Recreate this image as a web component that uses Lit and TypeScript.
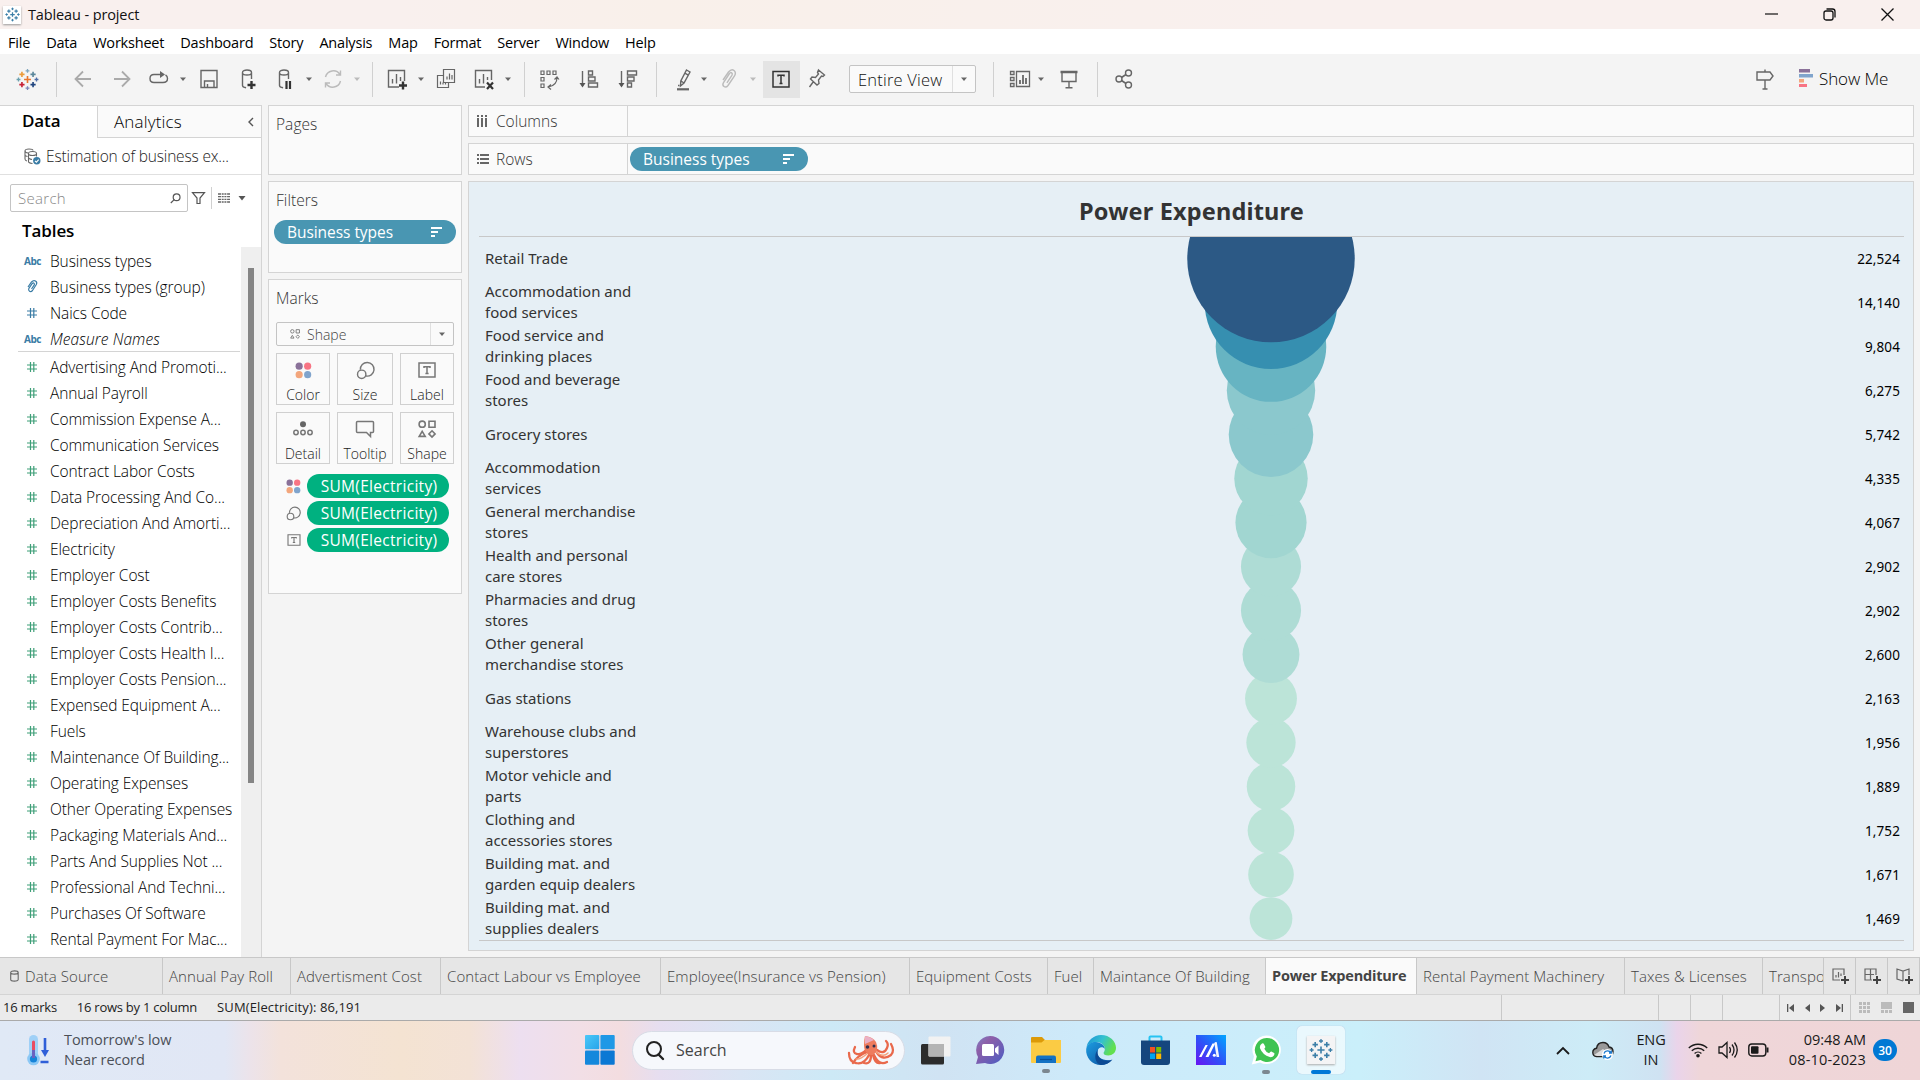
import { LitElement, html, svg, css } from "lit";
import { customElement } from "lit/decorators.js";

const MENU = ["File", "Data", "Worksheet", "Dashboard", "Story", "Analysis", "Map", "Format", "Server", "Window", "Help"];

const DIMENSIONS: Array<[string, string]> = [
  ["abc", "Business types"],
  ["clip", "Business types (group)"],
  ["num", "Naics Code"],
  ["abc", "Measure Names"],
];

const MEASURES = [
  "Advertising And Promoti...", "Annual Payroll", "Commission Expense A...", "Communication Services",
  "Contract Labor Costs", "Data Processing And Co...", "Depreciation And Amorti...", "Electricity",
  "Employer Cost", "Employer Costs Benefits", "Employer Costs Contrib...", "Employer Costs Health I...",
  "Employer Costs Pension...", "Expensed Equipment A...", "Fuels", "Maintenance Of Building...",
  "Operating Expenses", "Other Operating Expenses", "Packaging Materials And...", "Parts And Supplies Not ...",
  "Professional And Techni...", "Purchases Of Software", "Rental Payment For Mac...",
];

const DATA: Array<[string[], number, string]> = [
  [["Retail Trade"], 22524, "#2c5985"],
  [["Accommodation and", "food services"], 14140, "#368fb0"],
  [["Food service and", "drinking places"], 9804, "#67b4c2"],
  [["Food and beverage", "stores"], 6275, "#8bc8cd"],
  [["Grocery stores"], 5742, "#8bc8cd"],
  [["Accommodation", "services"], 4335, "#a1d6d1"],
  [["General merchandise", "stores"], 4067, "#a1d6d1"],
  [["Health and personal", "care stores"], 2902, "#aedcd5"],
  [["Pharmacies and drug", "stores"], 2902, "#aedcd5"],
  [["Other general", "merchandise stores"], 2600, "#aedcd5"],
  [["Gas stations"], 2163, "#bce4d8"],
  [["Warehouse clubs and", "superstores"], 1956, "#bce4d8"],
  [["Motor vehicle and", "parts"], 1889, "#bce4d8"],
  [["Clothing and", "accessories stores"], 1752, "#bce4d8"],
  [["Building mat. and", "garden equip dealers"], 1671, "#bce4d8"],
  [["Building mat. and", "supplies dealers"], 1469, "#bce4d8"],
];

const TABS = [
  "Annual Pay Roll", "Advertisment Cost", "Contact Labour vs Employee", "Employee(Insurance vs Pension)",
  "Equipment Costs", "Fuel", "Maintance Of Building", "Power Expenditure", "Rental Payment Machinery",
  "Taxes & Licenses", "Transpo",
];

const icon = (w: number, h: number, body: unknown, cls = "") =>
  html`<svg class="i ${cls}" width=${w} height=${h} viewBox="0 0 ${w} ${h}" fill="none" stroke="#666" stroke-width="1.4">${body}</svg>`;

const caret = (color = "#666") =>
  html`<svg class="i" width="8" height="8" viewBox="0 0 8 8"><path d="M1 2.5h6L4 6z" fill=${color} /></svg>`;

const plus = (x: number, y: number, r: number, c: string, w: number) =>
  svg`<path d="M${x - r} ${y}h${2 * r}M${x} ${y - r}v${2 * r}" stroke=${c} stroke-width=${w} />`;

const tableauMark = (size: number, c: string[], w: number) => html`
  <svg class="i" width=${size} height=${size} viewBox="0 0 24 24" fill="none">
    ${plus(12, 12, 3.6, c[0], w)}
    ${plus(6.2, 6.6, 2.7, c[1], w)} ${plus(17.8, 6.6, 2.7, c[2], w)}
    ${plus(6.2, 17.4, 2.7, c[3], w)} ${plus(17.8, 17.4, 2.7, c[4], w)}
    ${plus(12, 3, 2, c[5], w * 0.8)} ${plus(12, 21, 2, c[6], w * 0.8)}
    ${plus(2.6, 12, 2, c[7], w * 0.8)} ${plus(21.4, 12, 2, c[8], w * 0.8)}
  </svg>`;
const BLUE9 = Array(9).fill("#3c7fa8");
const TINTS = ["#e8762d", "#eb9c3c", "#5b879b", "#c72035", "#1f447e", "#7fa6bd", "#7b86b8", "#6ba0ae", "#4f6ea8"];

const sortGlyph = svg`<path d="M0 1h11M0 5h7M0 9h4" stroke="#fff" stroke-width="2" />`;

const colorDots = (s: number) => html`<svg class="i" width=${s} height=${s} viewBox="0 0 18 18">
  <circle cx="4.4" cy="4.4" r="3.8" fill="#8a7199" /><circle cx="13.4" cy="4.4" r="3.8" fill="#f87484" />
  <circle cx="4.4" cy="13.4" r="3.8" fill="#f3a67c" /><circle cx="13.4" cy="13.4" r="3.8" fill="#80a4cc" /></svg>`;
const sizeGlyph = (s: number) => html`<svg class="i" width=${s} height=${s} viewBox="0 0 20 20" fill="none" stroke="#777" stroke-width="1.5">
  <path d="M4.6 9.2a7.2 7.2 0 1 1 5.8 6.6" /><circle cx="6" cy="14" r="4.4" /></svg>`;
const labelGlyph = (w: number, h: number) => html`<svg class="i" width=${w} height=${h} viewBox="0 0 18 16" fill="none" stroke="#777" stroke-width="1.5">
  <path d="M1 1h16v14H1zM6 6V4.7h6V6M9 4.7v6.6M7.4 11.4h3.2" /></svg>`;
const shapeGlyph = (s: number) => html`<svg class="i" width=${s} height=${s} viewBox="0 0 18 18" fill="none" stroke="#777" stroke-width="1.6">
  <circle cx="4.2" cy="4.2" r="3.1" /><path d="M11 1.2h6v6h-6zM4.2 11.4l3 5h-6zM14 10.8l3.1 3.1-3.1 3.1-3.1-3.1z" /></svg>`;
const detailGlyph = html`<svg class="i" width="20" height="16" viewBox="0 0 20 16" fill="none" stroke="#777" stroke-width="1.5">
  <circle cx="10" cy="3.2" r="3" fill="#666" stroke="none" /><circle cx="3" cy="11.5" r="2.2" /><circle cx="10" cy="11.5" r="2.2" /><circle cx="17" cy="11.5" r="2.2" /></svg>`;
const tooltipGlyph = html`<svg class="i" width="20" height="18" viewBox="0 0 20 18" fill="none" stroke="#777" stroke-width="1.5">
  <path d="M2.5 1.5h15q1 0 1 1v9q0 1-1 1h-2v4l-4-4h-9q-1 0-1-1v-9q0-1 1-1z" /></svg>`;

const cylinder = svg`<path d="M15.500 12V5.500c0-3.400-9-3.400-9 0v13c0 1.400 1.600 2 3.600 2.300M6.500 5.800c0 3 9 3 9 0" />`;

@customElement("tb-toolbar")
class TbToolbar extends LitElement {
  static styles = css`
    :host { display: grid; height: 51px; padding: 0 0 0 16px; align-items: center; background: #f4f4f4;
      grid-template-columns: 40px 15px 39px 37px 32px 18px 39px 37px 32px 16px 32px 19px 13px 32px 17px 38px 32px 20px 13px 40px 39px 40px 15px 29px 17px 32px 14px 42px 44px 144px 13px 31px 20px 40px 15px 641px 46px 1fr;
      font: 350 17px "Open Sans", "Noto Sans", sans-serif; color: #111; padding-bottom: 1px; box-sizing: border-box; }
    .i { display: block; overflow: visible; }
    .sep { width: 1px; height: 35px; background: #d0d0d0; }
    .on { width: 37px; height: 37px; background: #e4e4e4; display: grid; place-items: center; }
    .on > .i { margin-right: 2px; }
    .select { width: 127px; height: 28px; box-sizing: border-box; border: 1px solid #c4c4c4; border-radius: 2px; background: #fafafa; display: flex; align-items: center; }
    .val { flex: 1; padding-left: 8px; font-size: 16.500px; letter-spacing: 0.2px; }
    .drop { width: 22px; height: 26px; border-left: 1px solid #e0e0e0; display: grid; place-items: center; }
    .show { display: flex; gap: 5px; align-items: center; font-size: 17px; letter-spacing: -0.1px; color: #000; white-space: nowrap; padding-bottom: 2px; }
  `;
  render() {
    const sep = html`<span class="sep"></span>`;
    const g = "#bbb";
    return html`
      ${tableauMark(23, TINTS, 1.7)}${sep}
      ${icon(24, 24, svg`<path d="M20 12H4.5M12 4.5L4.5 12l7.5 7.5" stroke="#aaa" stroke-width="1.8" />`)}
      ${icon(24, 24, svg`<path d="M4 12h15.5M12 4.5l7.5 7.5-7.5 7.5" stroke="#aaa" stroke-width="1.8" />`)}
      ${icon(24, 24, svg`<path d="M16 7.500H7q-4 0-4 4t4 4h9q4.500 0 4.500-4q0-2.500-2-3.500" /><path d="M13 4l5 3.500-5 3.500z" fill="#666" stroke="none" />`)}
      ${caret()}
      ${icon(24, 24, svg`<path d="M4 3.500h16v17H4zM7.500 20v-6h9.500v6M10.500 20v-3" />`)}
      ${icon(24, 24, svg`${cylinder}<path d="M11.500 18h8M15.500 14v8" stroke="#333" stroke-width="2.400" />`)}
      ${icon(24, 24, svg`${cylinder}<path d="M13.500 14v8M17 14v8" stroke="#333" stroke-width="2.200" />`)}
      ${caret()}
      ${icon(24, 24, svg`<path d="M4.500 10a8 8 0 0 1 14.500-2.500M19.500 14a8 8 0 0 1-14.500 2.500M19.500 3.500V8H15M4.500 20.500V16H9" stroke=${g} />`)}
      ${caret(g)}${sep}
      ${icon(24, 24, svg`<path d="M14 20H3.500V3.500h16V14M7.500 16.500V12M11.500 16.500V7M15.500 14v-4" /><path d="M14 18.500h8M18 14.500v8" stroke="#333" stroke-width="2.400" />`)}
      ${caret()}
      ${icon(24, 24, svg`<path d="M9.500 2.500h11v13h-11zM9 8.500H3.500v12h11V16M13 12.500V9.500M15.500 12.500V6.500M18 12.500V8M6.500 17.500v-3M9 17.500v-2M11.500 17.500v-2" stroke-width="1.200" />`)}
      ${icon(24, 24, svg`<path d="M13 20H3.500V3.500h16V13M7.500 16.500V12M11.500 16.500V7M15.500 13v-3" /><path d="M15 15.500l6 6.500M21 15.500L15 22" stroke="#333" stroke-width="2.200" />`)}
      ${caret()}${sep}
      ${icon(24, 24, svg`<path d="M4 4h3v3.500H4zM10 4h3v3.500h-3zM16 4h3v3.500h-3zM4 10.500h3v3.500H4zM4 17h3v3.500H4zM20 10.500q0 8-8.500 9.500M17.500 12.500l2.500-2.500 2 2.500M14 17.500l-3 2.500 3 2.500" stroke-width="1.200" />`)}
      ${icon(24, 24, svg`<path d="M5.500 4v15M11.500 4h4v4h-4zM11.500 10h6.500v4h-6.500zM11.500 16h9v4h-9z" /><path d="M2.500 16h6l-3 4.500z" fill="#555" stroke="none" />`)}
      ${icon(24, 24, svg`<path d="M5.500 4v15M11.500 4h9v4h-9zM11.500 10h6.500v4h-6.500zM11.500 16h4v4h-4z" /><path d="M2.500 16h6l-3 4.500z" fill="#555" stroke="none" />`)}
      ${sep}
      ${icon(24, 24, svg`<path d="M15.500 3l3.500 2-6 11-3.500 3 .3-5zM13.800 6.200l3.500 2M10 14l3 2" /><path d="M6 22.300h12" stroke-width="2.200" /><path d="M7 18.500h1.500" />`)}
      ${caret()}
      ${icon(24, 24, svg`<path d="M6 13l5.500-8q3-3.500 5.500-1.500t.5 5.500l-6.500 9.500q-2 2.500-4 1t-.5-4l6-9q1-1.500 2.200-.6t.2 2.500l-5 7.500" stroke=${g} />`)}
      ${caret(g)}
      <span class="on">${icon(24, 24, svg`<path d="M4 4.500h16v15.500H4zM9 9.500V8.200h6v1.300M12 8.200v8.200M10.500 16.400h3" stroke="#333" stroke-width="1.500" />`)}</span>
      ${icon(24, 24, svg`<path d="M13.500 3l6 5-1.500 1.500-1.500-.5-3 4 .5 3.500-2 1.500-6.500-6 1.500-2 3.500.5 3-3.500-1-1.500zM8.500 14.500L4.500 20" />`)}
      <span class="select"><span class="val">Entire View</span><span class="drop">${caret()}</span></span>
      ${sep}
      ${icon(28, 24, svg`<path d="M4.500 4.500h3.500v3h-3.500zM4.500 10.500h3.500v3h-3.500zM4.500 16.500h3.500v3h-3.500zM10.500 4.500h13v15h-13z" stroke-width="1.300" /><path d="M14 17v-4M17 17V8M20 17v-6" stroke-width="1.800" />`)}
      ${caret()}
      ${icon(24, 24, svg`<path d="M3.500 5h17" stroke-width="2.500" /><path d="M5 5v9.500h14V5M12 15v5.500M8.500 20.800h7" />`)}
      ${sep}
      ${icon(24, 24, svg`<circle cx="7" cy="12" r="3" /><circle cx="16.500" cy="6" r="3" /><circle cx="16.500" cy="18" r="3" /><path d="M9.500 10.500l4.500-3M9.500 13.500l4.500 3" stroke-width="1.600" />`)}
      ${icon(24, 24, svg`<path d="M4 5h13l3 4-3 4H4zM12 2.500V5M12 13v9M9.500 22h5" />`)}
      <span class="show"><svg class="i" width="15" height="18" viewBox="0 0 15 18">
        <path d="M0 0h11v3.500H0z" fill="#8a7199" /><path d="M0 5h14v3.500H0z" fill="#80a4cc" />
        <path d="M0 10h5v3.500H0z" fill="#f3a67c" /><path d="M0 15h8v3H0z" fill="#f87484" /></svg>Show Me</span>
    `;
  }
}

@customElement("tb-sidebar")
class TbSidebar extends LitElement {
  static styles = css`
    :host { display: flex; flex-direction: column; width: 262px; box-sizing: border-box; background: #fff; border-top: 1px solid #d4d4d4; border-right: 1px solid #d4d4d4;
      font: 350 15.500px "Open Sans", "Noto Sans", sans-serif; color: #000; overflow: hidden; }
    .i { display: block; overflow: visible; }
    .tabs { display: flex; height: 32px; }
    .data { width: 97px; padding-left: 22px; box-sizing: border-box; font-weight: 600; font-size: 17px; line-height: 30px; color: #000; letter-spacing: -0.1px; }
    .ana { flex: 1; display: flex; justify-content: space-between; align-items: center; padding: 0 6px 0 16px; background: #fafafa; border-left: 1px solid #d4d4d4; border-bottom: 1px solid #d4d4d4; font-size: 17px; letter-spacing: 0.15px; box-sizing: border-box; }
    .src { display: flex; height: 36px; align-items: center; gap: 5px; padding-left: 24px; border-bottom: 1px solid #e0e0e0; color: #222; letter-spacing: -0.17px; box-sizing: border-box; height: 37px; }
    .tools { display: flex; align-items: center; padding: 9px 0 0 10px; height: 28px; }
    .search { width: 178px; height: 28px; box-sizing: border-box; border: 1px solid #c4c4c4; border-radius: 2px; display: flex; align-items: center; justify-content: space-between; padding: 0 6px 0 7px; color: #888; font-size: 15px; letter-spacing: 0.3px; }
    .filter { margin-left: 4px; }
    .bar { width: 1px; height: 22px; background: #d0d0d0; margin: 0 6px 0 6px; }
    .car { margin-left: 8px; }
    .tables { font-weight: 600; font-size: 17px; color: #000; padding: 7px 0 0 22px; line-height: 24px; height: 28px; letter-spacing: -0.1px; }
    .body { display: flex; flex: 1; min-height: 0; }
    .list { width: 241px; }
    .row { display: grid; grid-template-columns: 32px 1fr; height: 26px; align-items: center; padding-left: 18px; white-space: nowrap; letter-spacing: -0.1px; }
    .name { line-height: 26px; padding-top: 1px; }
    .it { font-style: italic; letter-spacing: 0.1px; }
    .abc { color: #3a7ca5; font-size: 10px; font-weight: 700; padding-left: 6px; letter-spacing: -0.5px; }
    .ico { padding-left: 9px; }
    .rule { height: 1px; background: #d4d4d4; margin: 0 1px 1px 18px; }
    .track { width: 20px; background: #efefef; padding: 21px 0 0 7px; box-sizing: border-box; }
    .thumb { width: 6px; height: 515px; background: #858585; }
  `;
  private typeIcon(kind: string, color: string) {
    if (kind === "abc") return html`<span class="abc">Abc</span>`;
    if (kind === "clip")
      return html`<span class="ico"><svg class="i" width="11" height="13" viewBox="0 0 11 13" fill="none" stroke="#3a7ca5" stroke-width="1.200"><path d="M1 7l3.500-5q2-2.200 4-1t.8 3.500L5.500 10.500q-1.500 1.800-3 .8t-.6-3L5.300 3.500q1-1 1.800-.2t0 1.900L4.500 9" /></svg></span>`;
    return html`<span class="ico"><svg class="i" width="10" height="10" viewBox="0 0 10 10" fill="none" stroke=${color} stroke-width="1.200"><path d="M0 3h10M0 7h10M3.500 0v10M6.800 0v10" /></svg></span>`;
  }
  render() {
    return html`
      <div class="tabs"><div class="data">Data</div><div class="ana">Analytics<svg class="i" width="8" height="10" viewBox="0 0 8 10" fill="none" stroke="#555" stroke-width="1.400"><path d="M6 1L2 5l4 4" /></svg></div></div>
      <div class="src"><svg class="i" width="17" height="17" viewBox="0 0 17 17" fill="none" stroke="#666" stroke-width="1.100">
        <path d="M1 3v8q0 1.500 2 2M1 3q0-2 4-2t4 1.500M1 3q0 1.500 3 2M1 7q0 1 2.500 1.500M4.500 5.500v8q0 1.500 4 2M4.500 5.500q0-2 4-2t4 2v3M4.500 5.500q0 2 4 2t4-2M4.500 9.500q0 1.500 3.500 2" />
        <circle cx="12.800" cy="12.800" r="3.700" fill="#3a7ca5" stroke="none" /><path d="M11 12.800l1.400 1.400 2.300-2.600" stroke="#fff" /></svg>Estimation of business ex...</div>
      <div class="tools">
        <div class="search">Search<svg class="i" width="11" height="11" viewBox="0 0 11 11" fill="none" stroke="#555" stroke-width="1.200"><circle cx="6.600" cy="4.200" r="3.400" /><path d="M4.200 6.600L.8 10" /></svg></div>
        <svg class="i filter" width="13" height="12" viewBox="0 0 13 12" fill="none" stroke="#555" stroke-width="1.200"><path d="M.5 .6h12L8 6v5.500H5V6z" /></svg>
        <span class="bar"></span>
        <svg class="i" width="12" height="10" viewBox="0 0 12 10"><path d="M0 1h12M0 3.700h12M0 6.400h12M0 9h12" stroke="#666" stroke-width="1.300" stroke-dasharray="3 .7 2 .7 2 .7 3" /></svg>
        <svg class="i car" width="8" height="5" viewBox="0 0 8 5"><path d="M.5 0h7L4 4.500z" fill="#555" /></svg>
      </div>
      <div class="tables">Tables</div>
      <div class="body">
        <div class="list">
          ${DIMENSIONS.map(([k, n]) => html`<div class="row">${this.typeIcon(k, "#3a7ca5")}<span class="name ${n === "Measure Names" ? "it" : ""}">${n}</span></div>`)}
          <div class="rule"></div>
          ${MEASURES.map((n) => html`<div class="row">${this.typeIcon("num", "#3f9f78")}<span class="name">${n}</span></div>`)}
        </div>
        <div class="track"><div class="thumb"></div></div>
      </div>`;
  }
}

@customElement("tb-cards")
class TbCards extends LitElement {
  static styles = css`
    :host { display: flex; flex-direction: column; gap: 6px; width: 194px; font: 350 15.500px "Open Sans", "Noto Sans", sans-serif; color: #333; }
    .i { display: block; overflow: visible; }
    .card { border: 1px solid #d4d4d4; background: #fafafa; box-sizing: border-box; padding: 0 5px; }
    .pages { height: 70px; } .filters { height: 92px; } .marks { height: 315px; }
    .h { padding: 6px 0 1px 2px; line-height: 24px; letter-spacing: 0.05px; }
    .pill { height: 24px; border-radius: 12px; display: flex; align-items: center; color: #fff; box-sizing: border-box; letter-spacing: -0.05px; font-weight: 400; }
    .blue { background: #4996b2; justify-content: space-between; padding: 0 14px 0 13px; margin-top: 7px; }
    .green { background: #00b180; width: 142px; justify-content: center; font-size: 15.500px; font-weight: 500; letter-spacing: 0.3px; padding-left: 2px; }
    .shape { margin: 11px 2px 7px 2px; height: 24px; border: 1px solid #c4c4c4; border-radius: 2px; display: flex; align-items: center; padding-left: 13px; gap: 7px; font-size: 14px; box-sizing: border-box; color: #444; }
    .drop { margin-left: auto; width: 22px; height: 22px; border-left: 1px solid #e0e0e0; display: grid; place-items: center; }
    .grid { display: grid; grid-template-columns: 54px 56px 54px; gap: 7px 6px; margin: 0 2px; justify-content: space-between; }
    .btn { height: 52px; border: 1px solid #d0d0d0; box-sizing: border-box; display: grid; grid-template-rows: 32px 1fr; justify-items: center; align-items: center; font-size: 14px; line-height: 17px; color: #222; }
    .t { align-self: start; }
    .enc { display: flex; flex-direction: column; gap: 3px; margin-top: 10px; }
    .line { display: grid; grid-template-columns: 33px 142px; align-items: center; }
    .line > .i { justify-self: center; margin-left: 6px; }
  `;
  render() {
    const btn = (g: unknown, t: string) => html`<div class="btn">${g}<span class="t">${t}</span></div>`;
    const line = (g: unknown) => html`<div class="line">${g}<div class="pill green">SUM(Electricity)</div></div>`;
    return html`
      <div class="card pages"><div class="h">Pages</div></div>
      <div class="card filters"><div class="h">Filters</div>
        <div class="pill blue">Business types<svg class="i" width="11" height="10" viewBox="0 0 11 10">${sortGlyph}</svg></div></div>
      <div class="card marks"><div class="h">Marks</div>
        <div class="shape">${shapeGlyph(10)}Shape<span class="drop">${caret()}</span></div>
        <div class="grid">
          ${btn(colorDots(17), "Color")}${btn(sizeGlyph(19), "Size")}${btn(labelGlyph(18, 16), "Label")}
          ${btn(detailGlyph, "Detail")}${btn(tooltipGlyph, "Tooltip")}${btn(shapeGlyph(18), "Shape")}
        </div>
        <div class="enc">${line(colorDots(15))}${line(sizeGlyph(15))}${line(labelGlyph(14, 12))}</div>
      </div>`;
  }
}

@customElement("tb-view")
class TbView extends LitElement {
  static styles = css`
    :host { display: flex; flex-direction: column; gap: 6px; flex: 1; font: 350 15.500px "Open Sans", "Noto Sans", sans-serif; color: #333; }
    .i { display: block; overflow: visible; }
    .shelf { height: 32px; border: 1px solid #d4d4d4; background: #fafafa; box-sizing: border-box; display: flex; align-items: center; }
    .lab { height: 30px; border-right: 1px solid #d4d4d4; display: grid; grid-template-columns: 19px 1fr; align-items: center; padding-left: 8px; width: 150px; }
    .pill { width: 178px; height: 24px; border-radius: 12px; background: #4996b2; color: #fff; margin-left: 2px; display: flex; align-items: center; justify-content: space-between; padding: 0 14px 0 13px; box-sizing: border-box; font-weight: 400; }
    .sheet { height: 770px; box-sizing: border-box; border: 1px solid #d4d4d4; background: #e6eff5; padding: 0 9px 0 10px; }
    h1 { margin: 0; height: 54px; font: 700 23.500px/58px "Noto Sans", sans-serif; text-align: center; color: #333; letter-spacing: 0.18px; }
    .plot { position: relative; border-top: 1px solid #c8c8c8; border-bottom: 1px solid #c8c8c8; height: 703px; overflow: hidden; }
    .marks { position: absolute; left: 0; top: 0; }
    .r { position: relative; height: 44px; display: flex; justify-content: space-between; align-items: center; padding: 0 4px 2px 6px; box-sizing: border-box; }
    .n { font: 15px/21px "Noto Sans", sans-serif; color: #333; }
    .v { font: 13.500px "Noto Sans", sans-serif; color: #000; letter-spacing: 0.1px; padding-top: 1px; }
  `;
  render() {
    return html`
      <div class="shelf"><div class="lab"><svg class="i" width="10" height="12" viewBox="0 0 10 12"><path d="M1 0v2M5 0v2M9 0v2M1 3v9M5 3v9M9 3v9" stroke="#666" stroke-width="2" /></svg>Columns</div></div>
      <div class="shelf"><div class="lab"><svg class="i" width="12" height="10" viewBox="0 0 12 10"><path d="M0 1h2M0 5h2M0 9h2M3 1h9M3 5h9M3 9h9" stroke="#666" stroke-width="2" /></svg>Rows</div>
        <div class="pill">Business types<svg class="i" width="11" height="10" viewBox="0 0 11 10">${sortGlyph}</svg></div></div>
      <div class="sheet">
        <h1>Power Expenditure</h1>
        <div class="plot">
          <svg class="marks" width="1425" height="704">
            ${DATA.map((d, i) => ({ d, i })).reverse().map(({ d, i }) => svg`<circle cx="792" cy=${21.6 + 44 * i} r=${0.558 * Math.sqrt(d[1])} fill=${d[2]} />`)}
          </svg>
          ${DATA.map(([n, v]) => html`<div class="r"><div class="n">${n.map((l) => html`<div>${l}</div>`)}</div><div class="v">${v.toLocaleString("en-US")}</div></div>`)}
        </div>
      </div>`;
  }
}

@customElement("tb-footer")
class TbFooter extends LitElement {
  static styles = css`
    :host { display: block; font: 350 15px "Open Sans", "Noto Sans", sans-serif; color: #444; white-space: nowrap; }
    .i { display: block; overflow: visible; }
    .tabs { display: grid; height: 37px; box-sizing: border-box; border-top: 1px solid #c8c8c8; background: #e6e6e6;
      grid-template-columns: 163px 128px 150px 220px 249px 138px 46px 172px 151px 208px 138px 61px 32px 32px 1fr; }
    .t { border-right: 1px solid #c8c8c8; padding-left: 6px; display: flex; align-items: center; overflow: hidden; letter-spacing: 0.08px; }
    .src { padding-left: 10px; gap: 6px; }
    .on { background: #fafafa; font-weight: 700; letter-spacing: -0.2px; font-size: 14.500px; padding-bottom: 1px; }
    .a { padding: 0; justify-content: center; }
    .status { display: grid; height: 27px; box-sizing: border-box; border-top: 1px solid #d4d4d4; border-bottom: 1px solid #aaa; background: #ebebeb; color: #222; font-size: 13px; font-weight: 400; letter-spacing: -0.1px;
      grid-template-columns: 1502px 157px 32px 32px 57px 71px 1fr; }
    .s { border-right: 1px solid #c8c8c8; display: flex; align-items: center; }
    .s:last-child { border: 0; }
    .info { gap: 20px; padding: 0 0 2px 3px; letter-spacing: -0.25px; }
    .sum { letter-spacing: 0.12px; }
    .nav { justify-content: space-between; padding: 0 7px; }
    .modes { justify-content: space-between; padding: 0 6px 0 8px; }
  `;
  render() {
    const p = svg`<path d="M10 13h8M14 9v8" stroke="#444" stroke-width="2" />`;
    return html`
      <div class="tabs">
        <div class="t src"><svg class="i" width="9" height="12" viewBox="0 0 9 12" fill="none" stroke="#666" stroke-width="1.100"><path d="M.7 2.500v7c0 2.200 7.500 2.200 7.500 0v-7c0-2.200-7.500-2.200-7.500 0c0 2.200 7.500 2.200 7.500 0" /></svg>Data Source</div>
        ${TABS.map((t) => html`<div class="t ${t === "Power Expenditure" ? "on" : ""}">${t}</div>`)}
        <div class="t a">${icon(18, 18, svg`<path d="M9 13H2V2h11v6M5 10.500V8M7.500 10.500V5M10 9V6.500" stroke-width="1.200" />${p}`)}</div>
        <div class="t a">${icon(18, 18, svg`<path d="M9 13H2V2h11v6M7.500 2v11M2 7.500h9" stroke-width="1.200" />${p}`)}</div>
        <div class="t a">${icon(18, 18, svg`<path d="M8 14l-6-2V2l6 2 6-2v6M8 4v10" stroke-width="1.200" />${p}`)}</div>
      </div>
      <div class="status">
        <div class="s info"><span>16 marks</span><span>16 rows by 1 column</span><span class="sum">SUM(Electricity): 86,191</span></div>
        <div class="s"></div><div class="s"></div><div class="s"></div><div class="s"></div>
        <div class="s nav">
          <svg class="i" width="7" height="8" viewBox="0 0 7 8"><path d="M0 0h1.300v8H0zM7 0v8L2 4z" fill="#555" /></svg>
          <svg class="i" width="5" height="8" viewBox="0 0 5 8"><path d="M5 0v8L0 4z" fill="#555" /></svg>
          <svg class="i" width="5" height="8" viewBox="0 0 5 8"><path d="M0 0v8l5-4z" fill="#555" /></svg>
          <svg class="i" width="7" height="8" viewBox="0 0 7 8"><path d="M5.700 0H7v8H5.700zM0 0v8l5-4z" fill="#555" /></svg>
        </div>
        <div class="s modes">
          <svg class="i" width="11" height="11" viewBox="0 0 11 11"><path d="M0 1.500h11M0 5.500h11M0 9.500h11" stroke="#bbb" stroke-width="3" stroke-dasharray="3 1" /></svg>
          <svg class="i" width="11" height="11" viewBox="0 0 11 11"><path d="M0 0h11v7H0z" fill="#bbb" /><path d="M0 9.500h11" stroke="#bbb" stroke-width="3" stroke-dasharray="3 1" /></svg>
          <svg class="i" width="11" height="11" viewBox="0 0 11 11"><path d="M0 0h11v11H0z" fill="#666" /></svg>
        </div>
      </div>`;
  }
}

@customElement("win-taskbar")
class WinTaskbar extends LitElement {
  static styles = css`
    :host { display: grid; height: 59px; align-items: center; font: 14.500px "Open Sans", "Noto Sans", sans-serif; color: #1a1a1a;
      grid-template-columns: 64px 521px 47px 289px 54px 56px 55px 55px 55px 55px 46px 259px 36px 39px 57px 30px 30px 30px 1fr;
      padding: 0 23px 1px 0; box-sizing: border-box;
      background: linear-gradient(90deg, #e0e9f6 0, #e1e7f5 225px, #ece3ea 250px, #f3e2db 280px, #f4e3d2 400px, #f3e2d6 470px, #eddff0 520px, #f2dfe6 580px, #f3dde0 620px, #e6def0 660px, #dae5f4 740px, #cde9f6 830px, #d0e3f3 940px, #cdeafa 1080px, #caeffa 1360px, #d0e4f4 1480px, #cdecf7 1590px, #cfe2f2 1660px, #ead4ea 1677px, #efd6d9 1700px, #efd5d7 1920px); }
    .i { display: block; overflow: visible; }
    .w { padding-left: 26px; }
    .weather { line-height: 20px; color: #4b4f56; letter-spacing: -0.05px; }
    .search { width: 273px; height: 39px; border-radius: 20px; box-sizing: border-box; background: #f6f8fc; border: 1px solid #d8dce6; display: flex; align-items: center; padding: 0 9px 0 12px; font-size: 16px; color: #444; gap: 12px; letter-spacing: 0; }
    .octo { margin-left: auto; }
    .app { position: relative; }
    .run::after { content: ""; position: absolute; left: 11px; bottom: -9px; width: 8px; height: 4px; border-radius: 2px; background: #7c8790; }
    .active { width: 48px; height: 48px; border-radius: 5px; background: rgba(255, 255, 255, 0.6); display: grid; place-items: center; position: relative; box-shadow: 0 0 1px #aac; }
    .active::after { content: ""; position: absolute; left: 14px; bottom: 0; width: 20px; height: 4px; border-radius: 2px; background: #0078d7; }
    .tile { width: 28px; height: 28px; background: #f4f4f5; box-shadow: 0 1px 2px #aaa; display: grid; place-items: center; }
    .lang { text-align: center; line-height: 20px; width: 40px; letter-spacing: -0.1px; }
    .end { display: flex; align-items: center; justify-content: flex-end; gap: 7px; }
    .time { text-align: right; line-height: 20px; letter-spacing: 0.15px; white-space: nowrap; }
    .hour { letter-spacing: -0.1px; }
    .badge { width: 24px; height: 22px; border-radius: 12px; background: #0078d4; color: #fff; font-size: 12px; font-weight: 600; display: grid; place-items: center; }
  `;
  render() {
    return html`
      <svg class="i w" width="20" height="31" viewBox="0 0 20 31"><rect x="3" y="0" width="9" height="26" rx="4.500" fill="#9fd0f7" /><circle cx="7.500" cy="24" r="6.300" fill="#8cc8f5" /><circle cx="7.500" cy="24" r="3.600" fill="#1683d8" /><path d="M7.500 7v9" stroke="#e94b62" stroke-width="3" stroke-linecap="round" /><path d="M7.500 15v8" stroke="#6a60c0" stroke-width="3" /><path d="M19 3v14M14.500 27h8" stroke="#2f5fd8" stroke-width="2.600" /><path d="M15 15h8l-4 7z" fill="#2f5fd8" /></svg>
      <div class="weather">Tomorrow's low<br />Near record</div>
      <svg class="i" width="30" height="30" viewBox="0 0 30 30"><defs><linearGradient id="wn" x1="0" y1="0" x2="1" y2="1"><stop stop-color="#4cc8f8" /><stop offset="1" stop-color="#27a4ea" /></linearGradient></defs>
        <rect width="14.300" height="14.300" rx="1" fill="url(#wn)" /><rect x="15.400" width="14.300" height="14.300" rx="1" fill="#1f98e6" /><rect y="15.400" width="14.300" height="14.300" rx="1" fill="#1488dc" /><rect x="15.400" y="15.400" width="14.300" height="14.300" rx="1" fill="#0b78d4" /></svg>
      <div class="search"><svg class="i" width="19" height="19" viewBox="0 0 19 19" fill="none" stroke="#222" stroke-width="2"><circle cx="9" cy="8" r="7" /><path d="M13.500 13.500l4.500 4.500" stroke-width="2.400" stroke-linecap="round" /></svg>Search
        <svg class="i octo" width="48" height="30" viewBox="0 0 48 30" fill="none" stroke-linecap="round">
          <path d="M20 17Q10 21 6 28M22 20Q17 30 9 28Q2 27 2 18M19 15Q14 20 10 19Q5 18 8 12M27 20Q32 31 40 27M30 18Q36 26 44 20Q48 16 44 9M30 15Q37 20 40 13Q42 9 39 6M24 20Q24 30 17 28M26 20Q28 29 33 28" stroke="#e9694c" stroke-width="2.300" />
          <path d="M21 18Q13 25 9 24M29 17Q36 23 41 18" stroke="#f6a27c" stroke-width="1.500" />
          <path d="M18 1q8 1 11 6q2 4 1 9q-4 6-9 3q-4-3-4-9q0-5 1-9z" fill="#ee7c5e" /><path d="M18 1q6 1 9 4l-9 4z" fill="#eab0c6" />
          <circle cx="20.500" cy="12" r="1.800" fill="#33304f" /><circle cx="27" cy="11" r="1.500" fill="#33304f" /></svg></div>
      <svg class="i" width="30" height="29" viewBox="0 0 30 29"><rect y="8" width="23" height="20.500" rx="1.500" fill="#2c2c2c" /><rect x="7.500" y="0.500" width="22" height="20" rx="1" fill="#f2f2f2" /><path d="M7.500 8H23v12.500H8.500q-1 0-1-1z" fill="#b4b4b4" /></svg>
      <svg class="i" width="30" height="30" viewBox="0 0 30 30"><defs><linearGradient id="ch" x1="0" y1="0" x2="1" y2="1"><stop stop-color="#7b83c8" /><stop offset=".3" stop-color="#8e5fa8" /><stop offset="1" stop-color="#4a5cc4" /></linearGradient></defs>
        <path d="M15 1a14 14 0 1 1-5 27L1 29l2-7A14 14 0 0 1 15 1z" fill="url(#ch)" /><rect x="7" y="9" width="12" height="12" rx="1.500" fill="#fff" /><path d="M20 13.500l3.500-3v9.500l-3.500-3z" fill="#fff" /></svg>
      <div class="app run"><svg class="i" width="30" height="28" viewBox="0 0 30 28"><path d="M0 2q0-1 1-1h10l3 3h15q1 0 1 1v5H0z" fill="#dc9a08" /><path d="M0 6.500h10.500l3-2.500H30v22q0 1-1 1H1q-1 0-1-1z" fill="#fbcb44" /><path d="M5 21.500q0-2 2-2h16q2 0 2 2V27H5z" fill="#1372c4" /><path d="M9 23.500h12" stroke="#0a4f96" stroke-width="1.200" /></svg></div>
      <svg class="i" width="30" height="30" viewBox="0 0 30 30"><defs><linearGradient id="e1" x1="0" y1="0" x2="1" y2=".4"><stop stop-color="#1b8fd8" /><stop offset=".55" stop-color="#33c1cf" /><stop offset="1" stop-color="#62e04f" /></linearGradient><linearGradient id="e2" x1="0" y1="0" x2="1" y2="1"><stop stop-color="#1d9de0" /><stop offset="1" stop-color="#0c4f9f" /></linearGradient></defs>
        <path d="M.3 13A15 15 0 0 1 15 0c9 0 15 6.500 15 12.800 0 5-3.800 7.700-7.600 7.700-3.600 0-5-1.500-4.800-2.800.3-1 1.400-1.700 1.200-4.200C18.500 9 13.500 6.500 9.500 7 5 7.500 1.500 9.500.3 13z" fill="url(#e1)" />
        <path d="M.2 14C1 9.500 5 6.800 9.800 7c5.200.2 9 3.500 9 7-1.500-2.500-6.500-2.500-7.300 2.500-.8 5.500 5 10 14.500 8.500A14.900 14.900 0 0 1 15 30C6 30-.6 22.500.2 14z" fill="url(#e2)" />
        <path d="M12 14.500c-2 5 2 11.500 9 11.300q3.500 0 5.500-1.500Q22 30 15 30c-5.500-1-8-10-3-15.500z" fill="#0c4a94" /></svg>
      <svg class="i" width="29" height="30" viewBox="0 0 29 30"><path d="M8.500 6V2.500q0-1 1-1h10q1 0 1 1V6" fill="none" stroke="#27c3f2" stroke-width="2" /><path d="M0 5.500h29V27q0 3-3 3H3q-3 0-3-3z" fill="#15467e" /><path d="M9 12h5v5.500H9z" fill="#f25022" /><path d="M15.200 12h5v5.500h-5z" fill="#7fba00" /><path d="M9 18.500h5V24H9z" fill="#00a4ef" /><path d="M15.200 18.500h5V24h-5z" fill="#ffb900" /></svg>
      <svg class="i" width="30" height="30" viewBox="0 0 30 30"><defs><linearGradient id="ma" x1="0" y1="1" x2="1" y2="0"><stop stop-color="#6a12f2" /><stop offset=".5" stop-color="#2c55f8" /><stop offset="1" stop-color="#00a6ff" /></linearGradient></defs><rect width="30" height="30" fill="url(#ma)" /><path d="M3 22L9.500 10h2.300L5.500 22zM9.500 22L16.500 8.500h2.700L12.500 22z" fill="#fff" /><path d="M18.300 8q1-1.500 2.500-.8l2.400 14.800h-2.600z" fill="#f2f5ff" /><circle cx="18.300" cy="20.300" r="1.500" fill="#fff" /></svg>
      <div class="app run"><svg class="i" width="30" height="30" viewBox="0 0 30 30"><path d="M15.500.5a14.300 14.300 0 1 1-6.500 27L.8 29.500 3 21.500A14.300 14.300 0 0 1 15.500.5z" fill="#fff" /><path d="M15.500 3A12 12 0 1 1 9.500 25L4.500 26.300 5.800 21.500A12 12 0 0 1 15.500 3z" fill="#3fc351" /><path d="M11 8.500q1-.8 1.800.2l1.500 3q.3.800-1 2 1.500 3.300 4.800 4.500 1.500-2 2.200-1.700l2.800 1.500q.8.600-.2 2.400-1.500 2.200-4.200 1.600-7-2-9.700-8.800-.6-3 2-4.700z" fill="#fff" /></svg></div>
      <div class="active"><div class="tile">${tableauMark(24, BLUE9, 1.600)}</div></div>
      <svg class="i" width="14" height="9" viewBox="0 0 14 9" fill="none" stroke="#1a1a1a" stroke-width="1.800"><path d="M1 8l6-6 6 6" /></svg>
      <svg class="i" width="22" height="19" viewBox="0 0 22 19"><path d="M4.500 15.500Q.8 15 .8 11.500T4.500 7.300Q5.500 1.500 11 1.500q4.500 0 6 4.500 4 .5 4 4.500t-4 5z" fill="#999" stroke="#222" stroke-width="1.400" /><path d="M2 14l9-6 8 7H5z" fill="#ddd" /><circle cx="15.500" cy="13.500" r="5.500" fill="#fff" /><path d="M12 12.500a3.800 3.800 0 0 1 7-.5M19 14.500a3.800 3.800 0 0 1-7 .5M19.300 9.500V12H17M11.800 17.500V15H14" fill="none" stroke="#1877cc" stroke-width="1.300" /></svg>
      <div class="lang">ENG<br />IN</div>
      <svg class="i" width="20" height="16" viewBox="0 0 20 16" fill="none" stroke="#1a1a1a" stroke-width="1.400"><path d="M.8 6a13 13 0 0 1 18.400 0M3.800 8.800a8.800 8.800 0 0 1 12.400 0M6.600 11.500a4.900 4.900 0 0 1 6.800 0" /><circle cx="10" cy="13.800" r="1.800" fill="#1a1a1a" stroke="none" /></svg>
      <svg class="i" width="20" height="18" viewBox="0 0 20 18" fill="none" stroke="#1a1a1a" stroke-width="1.300"><path d="M1 6h3l5-4.500v15L4 12H1zM11.500 6q2 3 0 6M14 3.500q4 5.500 0 11M16.500 1.500q5.500 7.500 0 15" /></svg>
      <svg class="i" width="21" height="14" viewBox="0 0 21 14" fill="none" stroke="#1a1a1a" stroke-width="1.400"><rect x=".8" y="1" width="17" height="12" rx="3" /><rect x="3" y="3.300" width="7.500" height="7.500" rx="1" fill="#1a1a1a" stroke="none" /><path d="M19.500 4.500v5" stroke-width="2" /></svg>
      <div class="end"><div class="time"><span class="hour">09:48 AM</span><br />08-10-2023</div><div class="badge">30</div></div>
    `;
  }
}

@customElement("app-root")
export class AppRoot extends LitElement {
  static styles = css`
    :host { display: flex; flex-direction: column; width: 1920px; height: 1080px; overflow: hidden; background: #f4f4f4; font-family: "Open Sans", "Noto Sans", sans-serif; }
    .i { display: block; overflow: visible; }
    .title { height: 29px; display: flex; align-items: center; background: linear-gradient(90deg, #f9f0ee 0, #f9f0ee 400px, #f9f0ea 660px, #f9f0ee 1300px); padding: 0 26px 0 3px; box-sizing: border-box; font-size: 14.500px; color: #111; gap: 7px; letter-spacing: -0.12px; }
    .logo { width: 18px; height: 18px; background: #fff; box-shadow: 0 1px 2px #999; display: grid; place-items: center; }
    .win { margin-left: auto; display: flex; align-items: center; gap: 45px; }
    .menu { height: 25px; display: flex; align-items: center; gap: 16px; padding: 1px 0 0 8px; box-sizing: border-box; background: #fff; font-size: 14.500px; color: #000; letter-spacing: -0.2px; }
    .main { display: flex; gap: 6px; height: 852px; padding-right: 6px; }
  `;
  render() {
    return html`
      <div class="title"><span class="logo">${tableauMark(15, BLUE9, 2)}</span>Tableau - project
        <div class="win">
          <svg class="i" width="13" height="13" viewBox="0 0 13 13"><path d="M0 6h13" stroke="#111" stroke-width="1.200" /></svg>
          <svg class="i" width="13" height="13" viewBox="0 0 13 13" fill="none" stroke="#111" stroke-width="1.300"><rect x="1" y="3" width="9" height="9" rx="2" /><path d="M3.500 1H9.500q2.500 0 2.500 2.500V9.500" /></svg>
          <svg class="i" width="13" height="13" viewBox="0 0 13 13"><path d="M.5 .5l12 12M12.500 .5l-12 12" stroke="#111" stroke-width="1.300" /></svg>
        </div></div>
      <div class="menu">${MENU.map((m) => html`<span>${m}</span>`)}</div>
      <tb-toolbar></tb-toolbar>
      <div class="main"><tb-sidebar></tb-sidebar><tb-cards></tb-cards><tb-view></tb-view></div>
      <tb-footer></tb-footer>
      <win-taskbar></win-taskbar>`;
  }
}
